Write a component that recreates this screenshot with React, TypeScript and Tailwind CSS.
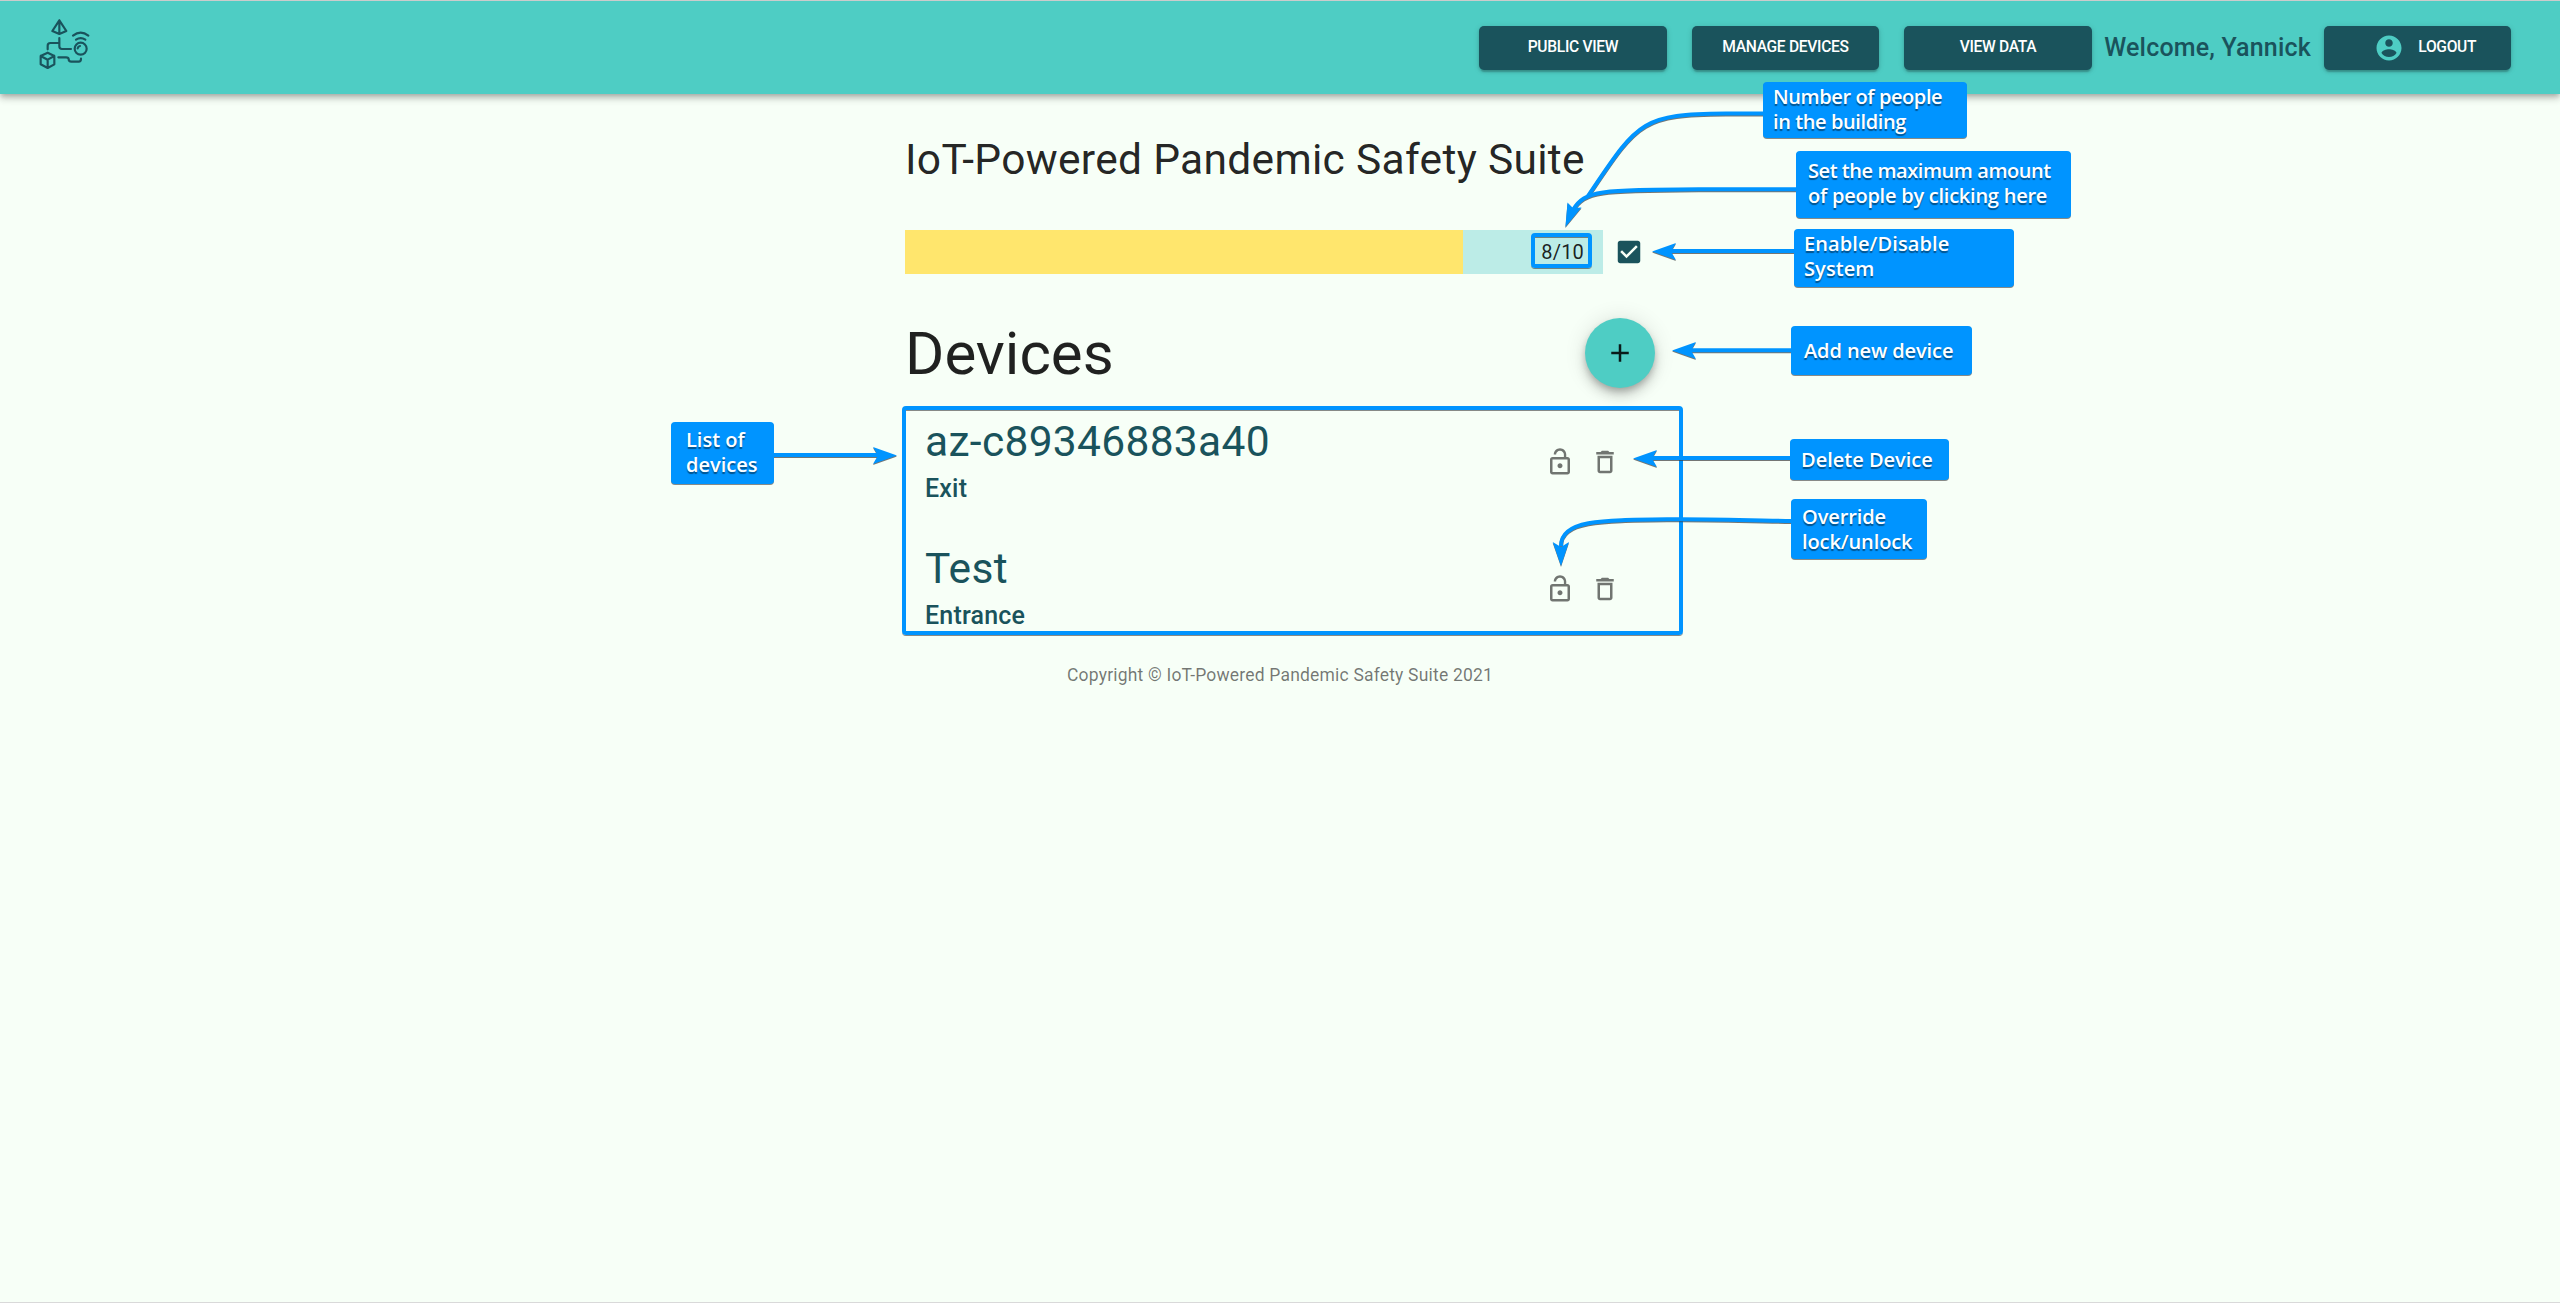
import React from "react";

const DEVICES = [
  { name: "az-c89346883a40", role: "Exit" },
  { name: "Test", role: "Entrance" },
];

function Logo() {
  return (
    <svg className="h-[54px] w-[54px]" viewBox="114 54 162 162" fill="none" stroke="#1A535C" strokeWidth="6.5" strokeLinejoin="round" strokeLinecap="round">
      <path d="M178 61 L157 93 L178 102 L199 93 Z M178 61 V102" />
      <path d="M178 114 V139 Q178 147 186 147 H213" />
      <path d="M143 148 V137 Q143 129 151 129 H177" />
      <path d="M175 172 H198 Q206 172 206 178 Q206 185 214 185 H236 Q243 185 243 176" />
      <circle cx="242" cy="146" r="18" />
      <path d="M233 145 Q234 139 240 138" />
      <path d="M219 107 Q242 89 265 107 M228 119 Q242 110 256 119" />
      <path d="M143 158 L163 168 V193 L143 204 L122 193 V168 Z M122 168 L143 179 L163 168 M143 179 V204" />
    </svg>
  );
}

function NavButton({ children }: { children: React.ReactNode }) {
  return (
    <button className="flex h-11 w-[187.5px] items-center justify-center rounded-[5px] bg-[#1A535C] pt-px text-[15.6px] font-medium tracking-[-0.02em] text-white shadow-[0_4px_1px_-2px_rgba(0,0,0,0.12),0_2px_3px_rgba(0,0,0,0.16),0_1px_6px_rgba(0,0,0,0.12)]">
      {children}
    </button>
  );
}

function LockOpen() {
  return (
    <svg className="h-[30px] w-[30px] fill-black/54" viewBox="0 0 24 24">
      <path d="M12 17c1.1 0 2-.9 2-2s-.9-2-2-2-2 .9-2 2 .9 2 2 2zm6-9h-1V6c0-2.76-2.24-5-5-5S7 3.24 7 6h1.9c0-1.71 1.39-3.1 3.1-3.1 1.71 0 3.1 1.39 3.1 3.1v2H6c-1.1 0-2 .9-2 2v10c0 1.1.9 2 2 2h12c1.1 0 2-.9 2-2V10c0-1.1-.9-2-2-2zm0 12H6V10h12v10z" />
    </svg>
  );
}

function Trash() {
  return (
    <svg className="h-[30px] w-[30px] fill-black/54" viewBox="0 0 24 24">
      <path d="M6 19c0 1.1.9 2 2 2h8c1.1 0 2-.9 2-2V7H6v12zM8 9h8v10H8V9zm7.5-5l-1-1h-5l-1 1H5v2h14V4h-3.5z" />
    </svg>
  );
}

function Callout({ className, children }: { className: string; children: React.ReactNode }) {
  return (
    <div
      className={
        "absolute rounded-[4px] bg-[#0094FF] font-['Open_Sans',sans-serif] text-[20px] leading-[25.2px] font-semibold whitespace-nowrap text-white shadow-[0_1px_0_rgba(60,60,60,0.6)] [text-shadow:0_1.5px_1px_rgba(0,0,0,0.45)] " +
        className
      }
    >
      {children}
    </div>
  );
}

function Arrows() {
  return (
    <svg
      className="pointer-events-none absolute top-0 left-0 h-[1303px] w-[2560px] [filter:drop-shadow(0_1px_0_rgba(60,60,60,0.7))]"
      viewBox="0 0 2560 1303"
    >
      <g fill="none" stroke="#0094FF" strokeWidth="4">
        <path d="M1764 113.5 H1726 C1640 114 1638 122 1588 196" />
        <path d="M1797 189.3 H1700 C1600 190 1585 190 1573 210" />
        <path d="M1795 251 H1668" />
        <path d="M1792 350.3 H1690" />
        <path d="M1791 458 H1650" />
        <path d="M1792 521 C1760 520.5 1720 519 1670 519.3 C1600 520 1561 520 1561 546" />
        <path d="M773 455 H880" />
      </g>
      <g fill="#0094FF">
        <path d="M1565.4 227 L1567.5 202.5 L1573 208 L1581.5 207.5 Z" />
        <path d="M1652 251.5 L1676 243 L1671 251.5 L1676 260 Z" />
        <path d="M1672 350.5 L1696 342 L1691 350.5 L1696 359 Z" />
        <path d="M1633 458.5 L1657 450 L1652 458.5 L1657 467 Z" />
        <path d="M1561 566 L1552.7 542 L1561 547 L1569 542 Z" />
        <path d="M897 455.5 L873 447 L878 455.5 L873 464 Z" />
      </g>
    </svg>
  );
}

export default function App() {
  return (
    <div className="relative flex h-[1303px] w-[2560px] flex-col overflow-hidden border-t border-b border-t-[#cccccc] border-b-[#d9d9d9] bg-[#F7FFF7] font-['Roboto',sans-serif] text-black/87">
      <header className="flex h-[93px] shrink-0 items-center justify-between bg-[#4ECDC4] pr-[49px] pl-[38px] shadow-[0_2px_5px_-1px_rgba(0,0,0,0.2),0_5px_6px_rgba(0,0,0,0.14),0_1px_12px_rgba(0,0,0,0.12)]">
        <div className="pb-[5px]">
          <Logo />
        </div>
        <nav className="flex items-center">
          <div className="flex gap-[25px]">
            <NavButton>PUBLIC VIEW</NavButton>
            <NavButton>MANAGE DEVICES</NavButton>
            <NavButton>VIEW DATA</NavButton>
          </div>
          <span className="mx-[12.5px] text-[25px] leading-10 font-medium tracking-[0.0075em] whitespace-nowrap text-[#1A535C]">
            Welcome, Yannick
          </span>
          <NavButton>
            <svg className="mr-[14px] ml-4 h-[30px] w-[30px] fill-[#4ECDC4]" viewBox="0 0 24 24">
              <path d="M12 2C6.48 2 2 6.48 2 12s4.48 10 10 10 10-4.48 10-10S17.52 2 12 2zm0 3c1.66 0 3 1.34 3 3s-1.34 3-3 3-3-1.34-3-3 1.34-3 3-3zm0 14.2c-2.5 0-4.71-1.28-6-3.22.03-1.99 4-3.08 6-3.08 1.99 0 5.97 1.09 6 3.08-1.29 1.94-3.5 3.22-6 3.22z" />
            </svg>
            LOGOUT
          </NavButton>
        </nav>
      </header>

      <main className="mx-auto flex w-[750px] flex-col pt-10">
        <h1 className="text-[42.5px] leading-[52.5px] tracking-[0.00735em] whitespace-nowrap">IoT-Powered Pandemic Safety Suite</h1>

        <div className="mt-[43.5px] flex h-11 items-center">
          <div className="flex h-full w-[698px] items-center justify-end bg-[linear-gradient(to_right,#FFE66D_80%,#BCECE7_80%)] pr-[19px] pb-px text-[20px] leading-[30px] tracking-[0.00938em]">
            8/10
          </div>
          <svg className="ml-[11px] h-[30px] w-[30px] fill-[#1A535C]" viewBox="0 0 24 24">
            <path d="M19 3H5c-1.11 0-2 .9-2 2v14c0 1.1.89 2 2 2h14c1.11 0 2-.9 2-2V5c0-1.1-.89-2-2-2zm-9 14l-5-5 1.41-1.41L10 14.17l7.59-7.59L19 8l-9 9z" />
          </svg>
        </div>

        <div className="mt-11 flex h-[70px] items-center justify-between">
          <h2 className="pt-px text-[60px] leading-[70px]">Devices</h2>
          <button className="flex h-[70px] w-[70px] items-center justify-center rounded-full bg-[#4ECDC4] shadow-[0_4px_6px_-1px_rgba(0,0,0,0.2),0_8px_12px_rgba(0,0,0,0.14),0_1px_22px_rgba(0,0,0,0.12)]">
            <svg className="h-[30px] w-[30px] fill-black/87" viewBox="0 0 24 24">
              <path d="M19 13h-6v6h-2v-6H5v-2h6V5h2v6h6v2z" />
            </svg>
          </button>
        </div>

        <ul className="mt-[17px]">
          {DEVICES.map((d) => (
            <li key={d.name} className="flex h-[127px] items-start justify-between pt-[9px] pr-[35px] pl-5 text-[#1A535C]">
              <div className="pt-[1.5px]">
                <div className="text-[42.5px] leading-[52.5px] tracking-[0.00735em]">{d.name}</div>
                <div className="mt-[0.5px] text-[25px] leading-10 font-medium tracking-[0.0075em]">{d.role}</div>
              </div>
              <div className="mt-[33px] flex gap-[15px]">
                <LockOpen />
                <Trash />
              </div>
            </li>
          ))}
        </ul>

        <p className="mt-1 text-center text-[17.5px] leading-[25px] tracking-[0.01071em] text-black/54">
          Copyright © IoT-Powered Pandemic Safety Suite 2021
        </p>
      </main>

      <div className="absolute inset-0 -top-px">
        <div className="absolute top-[406px] left-[902px] h-[229px] w-[781px] rounded-[4px] border-4 border-[#0094FF] shadow-[0_1px_0_rgba(60,60,60,0.6),inset_0_1px_0_rgba(60,60,60,0.6)]" />
        <div className="absolute top-[233px] left-[1531px] h-[35px] w-[61px] rounded-[4px] border-4 border-[#0094FF] shadow-[0_1px_0_rgba(60,60,60,0.6),inset_0_1px_0_rgba(60,60,60,0.6)]" />
        <Arrows />
        <Callout className="top-[82px] left-[1763px] h-14 w-[204px] pt-[2px] pl-[10px] tracking-[-0.4px]">
          <div>Number of people</div>
          <div>in the building</div>
        </Callout>
        <Callout className="top-[151px] left-[1796px] h-[67px] w-[275px] pt-[7px] pl-3">
          <div className="tracking-[-0.44px]">Set the maximum amount</div>
          <div className="tracking-[-0.24px]">of people by clicking here</div>
        </Callout>
        <Callout className="top-[229px] left-[1794px] h-[58px] w-[220px] pt-[2px] pl-[10px] tracking-[0.1px]">
          <div>Enable/Disable</div>
          <div>System</div>
        </Callout>
        <Callout className="top-[326px] left-[1791px] h-[49px] w-[181px] pt-3 pl-[13px] tracking-[-0.1px]">
          <div>Add new device</div>
        </Callout>
        <Callout className="top-[439px] left-[1790px] h-[41px] w-[159px] pt-2 pl-[11px]">
          <div>Delete Device</div>
        </Callout>
        <Callout className="top-[499px] left-[1791px] h-[60px] w-[136px] pt-[5px] pl-[11px] tracking-[-0.1px]">
          <div>Override</div>
          <div>lock/unlock</div>
        </Callout>
        <Callout className="top-[422px] left-[671px] h-[62px] w-[103px] pt-[5px] pl-[15px]">
          <div>List of</div>
          <div>devices</div>
        </Callout>
      </div>

      <div className="absolute -bottom-px left-[494px] h-px w-[54px] bg-white" />
    </div>
  );
}
